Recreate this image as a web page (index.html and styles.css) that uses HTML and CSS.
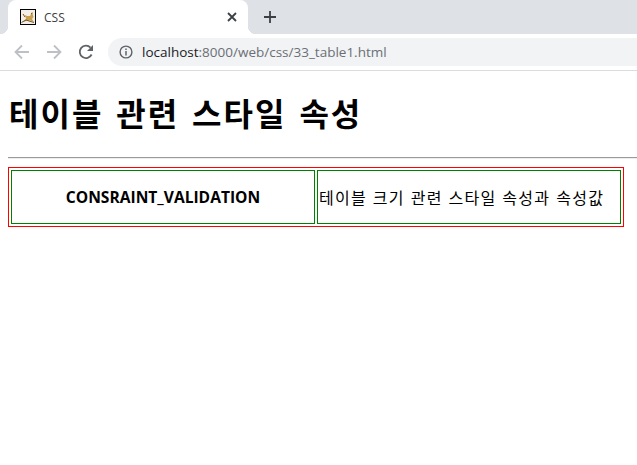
FILE: index.html
```html
<!DOCTYPE html>
<html lang="ko">
<head>
<meta charset="utf-8">
<title>CSS</title>
<link rel="stylesheet" href="styles.css">
</head>
<body>
<div class="chrome">
  <div class="tabstrip">
    <div class="tab">
      <svg class="favicon" width="16" height="16" viewBox="0 0 16 16">
        <rect x="0.5" y="0.5" width="15" height="15" fill="#f4efe6" stroke="#000"/>
        <path d="M2 13 L6 10 L5 6 L7 7 L10 7 L12 3 L13.500 8 L12 10 L14 13 L10 11.500 L6 12 Z" fill="#c9a04e"/>
        <path d="M1.500 13.500 L6 11 L9 12 L14 13.500" fill="none" stroke="#6d5a3a" stroke-width="1"/>
        <path d="M3 5 L5 8 M11 5 L12.500 4" stroke="#7a4b2a" stroke-width="1"/>
      </svg>
      <span class="tab-title">CSS</span>
      <svg class="tab-close" width="10" height="10" viewBox="0 0 10 10">
        <path d="M1 1 L9 9 M9 1 L1 9" stroke="#3c4043" stroke-width="1.800" fill="none"/>
      </svg>
    </div>
    <svg class="new-tab" width="12" height="12" viewBox="0 0 12 12">
      <path d="M6 0 V12 M0 6 H12" stroke="#3c4043" stroke-width="1.800" fill="none"/>
    </svg>
  </div>
  <div class="toolbar">
    <svg class="nav" width="16" height="16" viewBox="0 0 16 16">
      <path d="M15 8 H2 M8 1.500 L1.500 8 L8 14.500" stroke="#bdc1c6" stroke-width="1.800" fill="none"/>
    </svg>
    <svg class="nav" width="16" height="16" viewBox="0 0 16 16">
      <path d="M1 8 H14 M8 1.500 L14.500 8 L8 14.500" stroke="#bdc1c6" stroke-width="1.800" fill="none"/>
    </svg>
    <svg class="nav" width="16" height="16" viewBox="0 0 16 16">
      <path d="M13.600 10.500 A6.200 6.200 0 1 1 12.500 3.600" stroke="#5f6368" stroke-width="1.800" fill="none"/>
      <path d="M15 1 V7 H9 Z" fill="#5f6368"/>
    </svg>
    <div class="omnibox">
      <svg class="info" width="14" height="14" viewBox="0 0 14 14">
        <circle cx="7" cy="7" r="5.900" stroke="#5f6368" stroke-width="1.400" fill="none"/>
        <path d="M7 6 V10.500" stroke="#5f6368" stroke-width="1.500"/>
        <path d="M7 3.400 V5" stroke="#5f6368" stroke-width="1.500"/>
      </svg>
      <span class="url"><span class="host">localhost</span>:8000/web/css/33_table1.html</span>
    </div>
  </div>
</div>
<main class="page">
  <h1 class="heading">테이블 관련 스타일 속성</h1>
  <hr class="rule">
  <table class="data">
    <tr>
      <th class="cell">CONSRAINT_VALIDATION</th>
      <td class="cell">테이블 크기 관련 스타일 속성과 속성값</td>
    </tr>
  </table>
</main>
</body>
</html>
```

FILE: styles.css
```css
html, body {
  margin: 0;
  padding: 0;
  background: #fff;
  overflow: hidden;
}

body {
  font-family: "Open Sans", "Noto Sans CJK KR", sans-serif;
  color: #000;
}

.chrome {
  border-bottom: 1px solid #dadce0;
}

.tabstrip {
  display: flex;
  align-items: center;
  height: 34px;
  padding-left: 8px;
  background: #dee1e6;
}

.tab {
  position: relative;
  display: flex;
  align-items: center;
  box-sizing: border-box;
  width: 240px;
  height: 34px;
  padding: 0 11px 0 12px;
  background: #fff;
  border-radius: 8px 8px 0 0;
}

.tab::before,
.tab::after {
  content: "";
  position: absolute;
  bottom: 0;
  width: 8px;
  height: 8px;
}

.tab::before {
  left: -8px;
  background: radial-gradient(circle at 0 0, transparent 8px, #fff 8.500px);
}

.tab::after {
  right: -8px;
  background: radial-gradient(circle at 100% 0, transparent 8px, #fff 8.500px);
}

.favicon {
  flex: none;
}

.tab-title {
  flex: 1;
  margin-left: 8px;
  font-size: 12px;
  color: #3c4043;
}

.tab-close {
  flex: none;
}

.new-tab {
  margin-left: 16px;
}

.toolbar {
  display: flex;
  align-items: center;
  height: 36px;
  padding-left: 14px;
  background: #fff;
}

.nav {
  flex: none;
  margin-right: 16px;
}

.omnibox {
  display: flex;
  align-items: center;
  flex: 1;
  height: 28px;
  margin-left: -2px;
  padding-left: 11px;
  background: #f1f3f4;
  border-radius: 14px 0 0 14px;
}

.info {
  flex: none;
}

.url {
  margin-left: 9px;
  font-size: 13.500px;
  color: #6b6f74;
}

.host {
  color: #202124;
}

.page {
  padding: 0 8px;
}

.heading {
  margin: 0 0 0 1px;
  padding-top: 18px;
  font-family: "Noto Sans CJK KR", sans-serif;
  font-size: 32px;
  font-weight: 700;
  line-height: 46px;
  letter-spacing: 2px;
  word-spacing: 2px;
}

.rule {
  margin: 22px -8px 8px 0;
  border: 0;
  border-top: 1px solid #9a9a9a;
  border-bottom: 1px solid #eee;
}

.data {
  box-sizing: border-box;
  width: 616px;
  table-layout: fixed;
  border: 1px solid #f00;
  border-spacing: 2px;
}

.cell {
  box-sizing: border-box;
  height: 54px;
  padding: 1px;
  border: 1px solid #008000;
  font-family: "Open Sans", "Noto Sans CJK KR", sans-serif;
  font-size: 15.600px;
  line-height: 20px;
}

td.cell {
  font-family: "Noto Sans CJK KR", sans-serif;
  font-size: 16px;
  letter-spacing: 1.300px;
}
```
